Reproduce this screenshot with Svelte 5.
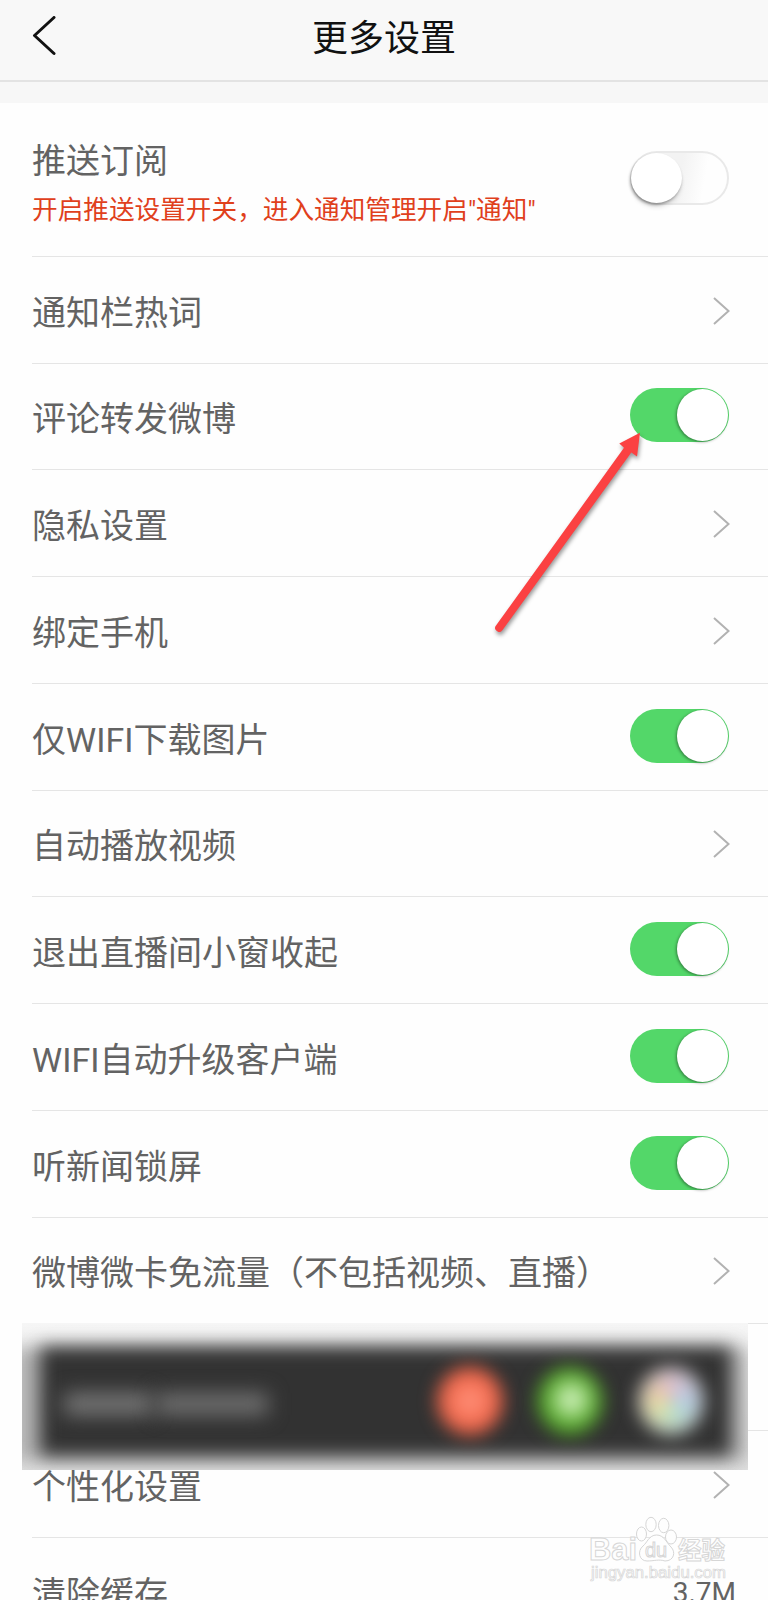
<script>
  const rows = [
    { label: "通知栏热词", type: "link" },
    { label: "评论转发微博", type: "switch" },
    { label: "隐私设置", type: "link" },
    { label: "绑定手机", type: "link" },
    { label: "仅WIFI下载图片", type: "switch" },
    { label: "自动播放视频", type: "link" },
    { label: "退出直播间小窗收起", type: "switch" },
    { label: "WIFI自动升级客户端", type: "switch" },
    { label: "听新闻锁屏", type: "switch" },
    { label: "微博微卡免流量（不包括视频、直播）", type: "link" },
    { label: "", type: "hidden" },
    { label: "个性化设置", type: "link" },
    { label: "清除缓存", type: "value", value: "3.7M" },
  ];
</script>

<div class="screen">
  <header class="header">
    <svg class="back" width="24" height="40" viewBox="0 0 24 40">
      <path d="M22 1.5 L2.5 19.5 L22 37.5" />
    </svg>
    <h1>更多设置</h1>
  </header>

  <main class="list">
    <div class="row push">
      <div class="texts">
        <span class="label">推送订阅</span>
        <span class="hint">开启推送设置开关，进入通知管理开启"通知"</span>
      </div>
      <span class="switch off"><span class="knob"></span></span>
    </div>

    {#each rows as row}
      <div class="row">
        <span class="label">{row.label}</span>
        {#if row.type === "link"}
          <svg class="chevron" width="18" height="30" viewBox="0 0 18 30">
            <path d="M2 2 L16.5 15 L2 28" />
          </svg>
        {:else if row.type === "switch"}
          <span class="switch"><span class="knob"></span></span>
        {:else if row.type === "value"}
          <span class="value">{row.value}</span>
        {:else}
          <div class="share">
            <div class="glow"></div>
            <div class="bar"></div>
            <span class="smudge one"></span>
            <span class="smudge two"></span>
            <span class="dot red"></span>
            <span class="dot green"></span>
            <span class="dot multi"></span>
          </div>
        {/if}
      </div>
    {/each}
  </main>

  <svg class="arrow" width="160" height="220" viewBox="490 420 160 220">
    <path d="M640 432.7 L619.3 443.5 L624 447.8 L496 625.5 A3.9 3.9 0 0 0 502.4 630.3 L631.3 452.6 L637 456.5 Z" />
  </svg>

  <svg class="watermark" width="150" height="76" viewBox="0 0 150 76">
    <text x="1" y="47" class="brand" textLength="48" lengthAdjust="spacingAndGlyphs">Bai</text>
    <g class="paw">
      <ellipse cx="53.5" cy="21" rx="5" ry="7" />
      <ellipse cx="63" cy="11.5" rx="5.2" ry="7.2" />
      <ellipse cx="75.7" cy="12.5" rx="5.2" ry="7.2" />
      <ellipse cx="83" cy="24" rx="5.5" ry="7" />
      <path d="M68.5 22 C61 22 59 30 55 33 C49 38 51 48 59 48 C66 48 71 46 77 48 C86 48 88 39 83 34 C78 29 76 22 68.5 22 Z" />
    </g>
    <text x="57" y="43.5" class="du" textLength="22">du</text>
    <text x="90" y="46" class="cn" textLength="47" lengthAdjust="spacingAndGlyphs">经验</text>
    <text x="3" y="65" class="url" textLength="135" lengthAdjust="spacingAndGlyphs">jingyan.baidu.com</text>
  </svg>
</div>

<style>
  :global(body) {
    margin: 0;
    background: #fefefe;
  }

  .screen {
    position: relative;
    width: 768px;
    height: 1600px;
    overflow: hidden;
    background: #fefefe;
    font-family: Roboto, "Noto Sans CJK SC", sans-serif;
    color: #636363;
  }

  .header {
    display: grid;
    grid-template-columns: 1fr auto 1fr;
    align-items: center;
    box-sizing: border-box;
    height: 82px;
    padding: 0 32px 9px;
    background: #f8f8f8;
    border-bottom: 2px solid #e3e3e3;
  }

  .back path {
    fill: none;
    stroke: #111;
    stroke-width: 3;
    stroke-linecap: round;
    stroke-linejoin: round;
  }

  h1 {
    margin: 7px 0 0;
    font-size: 36px;
    font-weight: 400;
    line-height: 48px;
    color: #111;
  }

  .list {
    border-top: 21px solid #f7f7f7;
  }

  .row {
    position: relative;
    display: flex;
    align-items: center;
    justify-content: space-between;
    box-sizing: border-box;
    height: 106.75px;
    margin-left: 32px;
    padding-right: 38px;
    border-bottom: 1px solid #e5e5e5;
  }

  .row.push {
    height: 153.75px;
  }

  .texts {
    display: flex;
    flex-direction: column;
    gap: 8px;
  }

  .label {
    font-size: 34px;
    line-height: 46px;
    padding-top: 6px;
    white-space: nowrap;
  }

  .push .label {
    padding-top: 8px;
  }

  .hint {
    font-size: 25.65px;
    line-height: 36px;
    color: #e0401c;
    white-space: nowrap;
  }

  .chevron {
    margin-top: 2px;
  }

  .chevron path {
    fill: none;
    stroke: #b2b2b2;
    stroke-width: 2;
  }

  .switch {
    display: flex;
    justify-content: flex-end;
    box-sizing: border-box;
    width: 99px;
    height: 54px;
    padding: 1px;
    margin: -2px 1px 0 0;
    border-radius: 27px;
    background: #53d769;
  }

  .knob {
    width: 51px;
    height: 52px;
    border-radius: 50%;
    background: #fff;
    box-shadow: -1px 1px 3px rgba(0, 0, 0, 0.4);
  }

  .switch.off {
    justify-content: flex-start;
    margin-top: -3px;
    border: 2px solid #e9e9e9;
    padding: 0;
    background: linear-gradient(100deg, #f3f3f3 50%, #fefefe 75%);
  }

  .off .knob {
    height: 50px;
    width: 51px;
    margin-left: -1px;
    box-shadow: -1px 2px 3px rgba(0, 0, 0, 0.35), 0 5px 4px rgba(0, 0, 0, 0.08);
  }

  .value {
    margin-right: -6px;
    padding-top: 4px;
    font-size: 28px;
  }

  /* blurred share bar that floats over the neighbouring rows */
  .share {
    position: absolute;
    z-index: 1;
    left: -10px;
    top: -1px;
    width: 726px;
    height: 147px;
    overflow: hidden;
    background: linear-gradient(#f6f6f6, #e2e2e2);
  }

  .share > * {
    position: absolute;
  }

  .glow {
    left: -10px;
    right: 0;
    top: 24px;
    bottom: 8px;
    background: #b4b4b4;
    filter: blur(9px);
  }

  .bar {
    left: 18px;
    right: 17px;
    top: 24px;
    bottom: 14px;
    background: #323232;
    filter: blur(9px);
  }

  .smudge {
    top: 70px;
    height: 22px;
    background: #777;
    filter: blur(10px);
  }

  .smudge.one {
    left: 42px;
    width: 88px;
  }

  .smudge.two {
    left: 134px;
    width: 112px;
    background: #707070;
  }

  .dot {
    top: 44px;
    width: 66px;
    height: 68px;
    border-radius: 50%;
    filter: blur(9px);
  }

  .dot.red {
    left: 415px;
    background: radial-gradient(#ff9079 10%, #f06245 60%);
  }

  .dot.green {
    left: 515px;
    background: radial-gradient(ellipse at 52% 48%, #d4f5c0 12%, #50a524 54%);
  }

  .dot.multi {
    left: 616px;
    background: radial-gradient(transparent 40%, #c4c4c4 70%),
      conic-gradient(#e2bcd0, #b0cdea 90deg, #b6e2c8 170deg, #e4e5a0 240deg, #eec8a0 300deg, #e2bcd0);
  }

  .arrow {
    position: absolute;
    left: 490px;
    top: 420px;
    overflow: visible;
    filter: drop-shadow(1px 3px 2px rgba(0, 0, 0, 0.4));
  }

  .arrow path {
    fill: #fb4142;
  }

  .watermark {
    position: absolute;
    left: 588px;
    top: 1513px;
  }

  .watermark text,
  .paw {
    fill: #fefefe;
    stroke: #d6d6d6;
    stroke-width: 1;
    font-family: "Liberation Sans", "Noto Sans CJK SC", sans-serif;
    font-weight: 700;
  }

  .brand {
    font-size: 32px;
  }

  .watermark .du {
    font-size: 20px;
    font-weight: 400;
  }

  .cn {
    font-size: 24px;
  }

  .watermark .url {
    font-size: 16px;
    font-weight: 400;
    stroke-width: 0.7;
  }
</style>
